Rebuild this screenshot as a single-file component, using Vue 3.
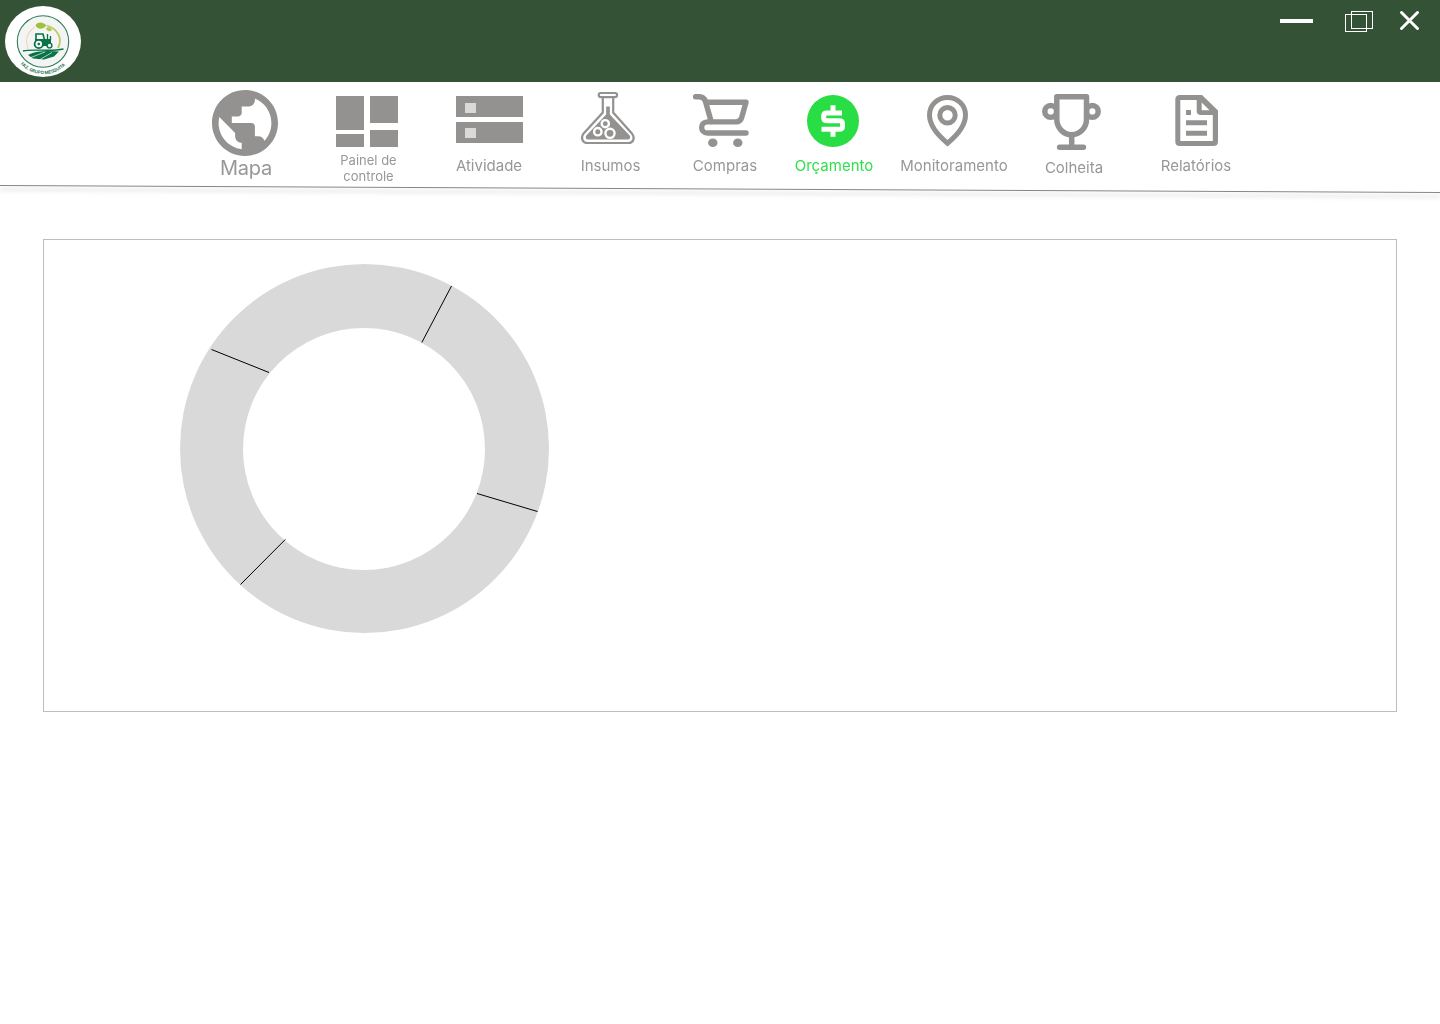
<script setup>
const items = [
  { id: 'mapa', label: 'Mapa', x: 190, w: 111, size: 'large' },
  { id: 'painel', label: 'Painel de controle', x: 301, w: 134, size: 'small' },
  { id: 'atividade', label: 'Atividade', x: 435, w: 108 },
  { id: 'insumos', label: 'Insumos', x: 543, w: 135 },
  { id: 'compras', label: 'Compras', x: 678, w: 94 },
  { id: 'orcamento', label: 'Orçamento', x: 772, w: 124, active: true },
  { id: 'monitoramento', label: 'Monitoramento', x: 896, w: 116 },
  { id: 'colheita', label: 'Colheita', x: 1012, w: 124, size: 'low' },
  { id: 'relatorios', label: 'Relatórios', x: 1136, w: 120 },
]
</script>

<template>
  <div class="app">
    <header class="topbar">
      <svg class="logo" width="90" height="82" viewBox="0 0 90 82">
        <defs><path id="logo-arc" d="M20.6 64 A31 31 0 0 0 66.4 64" /></defs>
        <ellipse cx="43" cy="41.5" rx="38" ry="35.5" fill="#fff" />
        <circle cx="43" cy="41.5" r="25.7" fill="#f3f4f3" stroke="#2c7a55" stroke-width="1.1" />
        <path d="M28.5 49A16.5 16.5 0 0 1 35 27" fill="none" stroke="#e3ddb0" stroke-width="1.1" />
        <path d="M47 25.5C58 29 63 39 58 48" fill="none" stroke="#b9cb62" stroke-width="1.8" />
        <path d="M35.5 25.5C37 21.5 43 21.5 46.5 25.5C43.5 29.5 38 30 35.5 25.5Z" fill="#9fc23c" />
        <path d="M46 28C48.5 26.5 51 27.5 52 30.5C49 32 46.5 31 46 28Z" fill="#b1ca52" />
        <path d="M23 51C33 48.5 50 52 63.5 49" fill="none" stroke="#087347" stroke-width="1.4" />
        <path d="M28 55C36 50.5 48 50.5 59 51.5L54 56.5L44 59.5L33 58.5Z" fill="#087347" />
        <path d="M31 57.5L45 52M40 59.5L52 52.5" stroke="#f3f4f3" stroke-width=".7" />
        <path d="M36 41V34H43L44.5 40" fill="none" stroke="#087347" stroke-width="1.6" />
        <path d="M35 39H43V46H35Z M43 39H51V46H43Z" fill="#087347" />
        <path d="M47.5 40V34M50.5 40V36" stroke="#087347" stroke-width="1.3" />
        <circle cx="38.8" cy="44" r="4.2" fill="#f3f4f3" stroke="#087347" stroke-width="1.8" />
        <circle cx="38.8" cy="44" r="1.3" fill="#087347" />
        <circle cx="49.5" cy="45.5" r="2.4" fill="#f3f4f3" stroke="#087347" stroke-width="1.4" />
        <text class="logo-text"><textPath href="#logo-arc" textLength="50">FAZ. GRUPO MESQUITA</textPath></text>
      </svg>
      <svg class="controls" width="170" height="50" viewBox="1270 0 170 50" fill="none" stroke="#fff">
        <path d="M1280 21H1313" stroke-width="4" />
        <rect x="1345.5" y="14.5" width="21" height="17" />
        <rect x="1351.5" y="11.5" width="21" height="17" />
        <path d="M1401.5 12.5L1417.5 28.5M1417.5 12.5L1401.5 28.5" stroke-width="3" stroke-linecap="round" />
      </svg>
    </header>

    <nav class="nav">
      <a
        v-for="it in items"
        :key="it.id"
        class="item"
        :class="[it.size, { active: it.active }]"
        :style="{ width: it.w + 'px' }"
      >
        <svg :width="it.w" height="74" :viewBox="`${it.x} 82 ${it.w} 74`" fill="currentColor">
          <path
            v-if="it.id === 'mapa'"
            transform="translate(205.4 83.4) scale(3.3)"
            d="M12 2C6.48 2 2 6.48 2 12s4.48 10 10 10 10-4.48 10-10S17.52 2 12 2zm-1 17.93c-3.95-.49-7-3.85-7-7.93 0-.62.08-1.21.21-1.79L9 15v1c0 1.1.9 2 2 2v1.93zm6.9-2.54c-.26-.81-1-1.39-1.9-1.39h-1v-3c0-.55-.45-1-1-1H8v-2h2c.55 0 1-.45 1-1V7h2c1.1 0 2-.9 2-2v-.41c2.93 1.19 5 4.06 5 7.41 0 2.08-.8 3.97-2.1 5.39z"
          />
          <path v-else-if="it.id === 'painel'" d="M336 96h28v34h-28zM370 96h28v27h-28zM336 134h28v13h-28zM370 130h28v17h-28z" />
          <g v-else-if="it.id === 'atividade'">
            <path d="M456 96h67v21h-67zM456 122h67v21h-67z" />
            <path d="M465 103h11v10h-11zM465 128h11v10h-11z" fill="#d9d9d9" />
          </g>
          <g v-else-if="it.id === 'insumos'">
            <g fill="none" stroke="currentColor" stroke-width="2.2">
              <rect x="598.7" y="93" width="18.4" height="4.1" rx="2" />
              <path d="M602.8 97V112.5L583.2 134C580.3 138.5 583 143 587.5 143H628.5C633 143 635.3 138.5 632.3 134L613.2 112.5V97" />
            </g>
            <path d="M606.2 106.5H609.8V114.5L629.7 135.5C631 137.8 629.5 139.6 627.3 139.6H588.7C586.4 139.6 585 137.8 586.3 135.5L606.2 114.5Z" />
            <g fill="currentColor" stroke="#fff" stroke-width="2.4">
              <circle cx="605.3" cy="123.7" r="3.6" />
              <circle cx="597.8" cy="131.7" r="3.7" />
              <circle cx="610" cy="133.3" r="4.6" />
            </g>
          </g>
          <g v-else-if="it.id === 'compras'">
            <path d="M695.6 96.7H699.5Q704 96.7 705.5 101.5L711.3 122M706 102.3H746L741.7 117.5Q740.4 121.9 736 121.9H707.5C699.7 121.9 699.7 133 707.5 133H746" fill="none" stroke="currentColor" stroke-width="5.4" stroke-linecap="round" stroke-linejoin="round" />
            <ellipse cx="712.8" cy="142.8" rx="4.7" ry="4.3" />
            <ellipse cx="737.8" cy="142.8" rx="4.7" ry="4.3" />
          </g>
          <g v-else-if="it.id === 'orcamento'">
            <circle cx="833" cy="121" r="26" />
            <path d="M842 112.9H827Q823.7 112.9 823.7 115.8V117.9Q823.7 120.7 827 120.7H839Q842.5 120.7 842.5 123.6V126.2Q842.5 129.2 839 129.2H821.5M833 105.3V113M833 129V136.7" fill="none" stroke="#fff" stroke-width="5" />
          </g>
          <g v-else-if="it.id === 'monitoramento'" fill="none" stroke="currentColor" stroke-width="5">
            <path d="M947.5 97.5C937.5 97.5 929.5 105 929.5 115C929.5 126 937.5 135 947.5 143.2C957.5 135 965.5 126 965.5 115C965.5 105 957.5 97.5 947.5 97.5Z" />
            <circle cx="947.5" cy="115.3" r="7.7" />
          </g>
          <g v-else-if="it.id === 'colheita'" fill="none" stroke="currentColor" stroke-width="5.5" stroke-linejoin="round" stroke-linecap="round">
            <circle cx="1050.7" cy="111.4" r="5.9" />
            <circle cx="1092.3" cy="111.4" r="5.9" />
            <path d="M1056.8 96.7H1086.5V119C1086.5 128 1080 134.7 1071.7 134.7C1063.4 134.7 1056.8 128 1056.8 119Z" fill="#fff" />
            <path d="M1071.7 135V147M1059.6 147.2H1083.4" />
          </g>
          <path
            v-else
            fill-rule="evenodd"
            d="M1180 95H1202L1218 110.5V141.5Q1218 146 1213.3 146H1180Q1175.3 146 1175.3 141.5V99.5Q1175.3 95 1180 95ZM1180.3 100V141H1212.8V115H1201Q1196.7 115 1196.7 111V100ZM1201.7 102.5V110.3H1209.5ZM1186 110h5v5h-5ZM1186 120.3h21v5h-21ZM1186 130.7h21v5h-21Z"
          />
        </svg>
        <span class="label">{{ it.label }}</span>
      </a>
      <svg class="rule" width="1440" height="24" viewBox="0 180 1440 24">
        <path d="M0 185.5L1440 192.5" stroke="#868686" stroke-width="1" />
      </svg>
    </nav>

    <main class="panel">
      <svg class="chart" width="371" height="371" viewBox="179 263 371 371">
        <circle cx="364.5" cy="448.5" r="184.5" fill="#d9d9d9" />
        <circle cx="364" cy="449" r="121" fill="#fff" />
        <path d="M451.5 286L421.8 342.5M211.5 349.5L269 372.5M477 493.5L537.5 511.5M285.3 539.5L240.5 584.5" stroke="#000" fill="none" />
      </svg>
    </main>
  </div>
</template>

<style>
body {
  margin: 0;
  background: #fff;
}
</style>

<style scoped>
.app {
  width: 1440px;
  height: 1024px;
  overflow: hidden;
  font-family: Inter, "Liberation Sans", sans-serif;
}
.topbar {
  display: flex;
  justify-content: space-between;
  height: 82px;
  background: #345336;
}
.topbar svg,
.item svg,
.chart {
  display: block;
}
.logo-text {
  font-size: 4.4px;
  font-weight: 700;
  fill: #2c7a55;
}
.nav {
  position: relative;
  display: flex;
  height: 103px;
  padding-left: 190px;
}
.item {
  display: flex;
  flex: none;
  flex-direction: column;
  align-items: center;
  color: #939291;
}
.item.active {
  color: #29dd44;
}
.label {
  margin-top: 1px;
  font-size: 15px;
  font-weight: 400;
  line-height: 18px;
  white-space: nowrap;
  opacity: 0.95;
}
.large .label {
  margin-top: 0;
  padding-left: 1px;
  font-size: 20px;
  line-height: 24px;
  letter-spacing: -0.2px;
}
.small .label {
  width: 70px;
  margin-top: -4px;
  padding-left: 1px;
  font-size: 13px;
  line-height: 16px;
  text-align: center;
  white-space: normal;
}
.low .label {
  margin-top: 3px;
}
.rule {
  position: absolute;
  left: 0;
  top: 98px;
  filter: drop-shadow(0 4px 2px rgba(0, 0, 0, 0.25));
}
.panel {
  box-sizing: border-box;
  width: 1354px;
  height: 473px;
  margin: 54px 0 0 43px;
  padding: 23px 0 0 135px;
  border: 1px solid #bdbdbd;
}
</style>
